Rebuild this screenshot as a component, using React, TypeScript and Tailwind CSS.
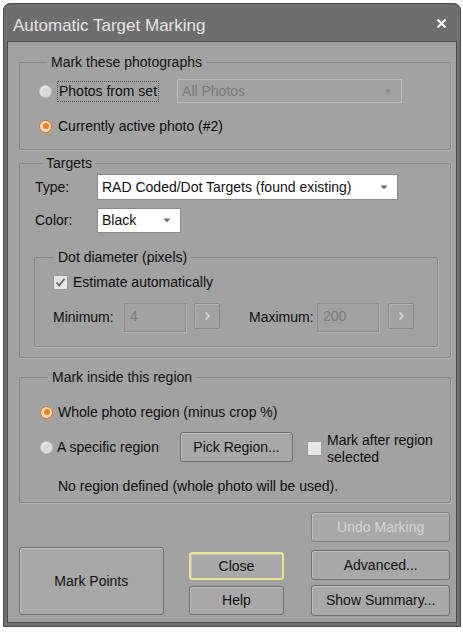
import React from "react";

const FONT = "font-['Liberation_Sans',Arial,sans-serif]";

function Radio({ checked = false }: { checked?: boolean }) {
  return checked ? (
    <span className="flex h-[13px] w-[13px] shrink-0 items-center justify-center rounded-full border border-[#c9732c] bg-[#f4d9bd] shadow-[0_0_2px_#e8a060]">
      <span className="h-[6px] w-[6px] rounded-full bg-[#e9801f]" />
    </span>
  ) : (
    <span className="h-[13px] w-[13px] shrink-0 rounded-full border border-[#c4c4c4] bg-[#dadada] shadow-[inset_1px_1px_2px_#f4f4f4]" />
  );
}

function Checkbox({ checked = false }: { checked?: boolean }) {
  return (
    <span className="flex h-[15px] w-[15px] shrink-0 items-center justify-center border border-[#9a9a9a] bg-[#e6e6e6]">
      {checked && (
        <svg width="11" height="11" viewBox="0 0 11 11">
          <path d="M1.5 5.5 L4.2 8.5 L9.5 1.8" fill="none" stroke="#6a6a6a" strokeWidth="1.8" />
        </svg>
      )}
    </span>
  );
}

function Arrow({ color = "#6c6c6c" }: { color?: string }) {
  return (
    <svg width="8" height="5" viewBox="0 0 8 5">
      <path d="M0.5 0.5 L7.5 0.5 L4 4.5 Z" fill={color} />
    </svg>
  );
}

function Btn({
  children,
  className = "",
}: {
  children: React.ReactNode;
  className?: string;
}) {
  return (
    <div
      className={
        "flex items-center justify-center rounded-[3px] border border-[#6f6f6f] bg-[#a8a8a8] text-[14px] text-[#111] shadow-[inset_1px_1px_0_#bebebe] " +
        className
      }
    >
      {children}
    </div>
  );
}

function Step() {
  return (
    <div className="flex h-[26px] w-[26px] items-center justify-center rounded-[2px] border border-[#878787] bg-[#a2a2a2] shadow-[inset_1px_1px_0_#b4b4b4]">
      <svg width="7" height="10" viewBox="0 0 7 10">
        <path d="M1.5 1.5 L5 5 L1.5 8.5" fill="none" stroke="#dcdcdc" strokeWidth="1.6" />
      </svg>
    </div>
  );
}

function Field({ value, className = "" }: { value: string; className?: string }) {
  return (
    <div
      className={
        "h-[29px] w-[62px] border border-[#8e8e8e] bg-[#a2a2a2] pl-[5px] pt-[4px] text-[14px] leading-[16px] text-[#7c7c7c] shadow-[1px_1px_0_#b2b2b2] " +
        className
      }
    >
      {value}
    </div>
  );
}

const GROUP =
  "rounded-[2px] border border-[#888888] shadow-[1px_1px_0_#b3b3b3]";
const LEGEND = "ml-[8px] px-[4px] text-[14px] leading-[16px] text-[#111]";

export default function App() {
  return (
    <div className={"h-[634px] w-[463px] bg-white pl-[3px] pt-[3px] " + FONT}>
      <div className="flex h-[624px] w-[458px] flex-col rounded-t-[7px] border border-[#4d4d4d] bg-[#6e6e6e] px-[3px] pb-[3px]">
        {/* title bar */}
        <div className="flex h-[37px] shrink-0 items-center justify-between pl-[6px] pr-[10px] pt-[7px]">
          <span className="text-[17px] text-[#e4e4e4]">Automatic Target Marking</span>
          <svg width="11" height="11" viewBox="0 0 11 11" className="-mt-[6px]">
            <path d="M1.5 1.5 L9.5 9.5 M9.5 1.5 L1.5 9.5" stroke="#f2f2f2" strokeWidth="2.4" />
          </svg>
        </div>

        {/* body */}
        <div className="flex flex-1 flex-col border border-[#4f4f4f] bg-[#a2a2a2] pl-[11px] pr-[6px] pt-[12px] pb-[6px] text-[14px] text-[#0d0d0d]">
          {/* Mark these photographs */}
          <fieldset className={"w-[432px] pb-[13px] pl-[19px] " + GROUP}>
            <legend className={LEGEND}>Mark these photographs</legend>
            <div className="mt-[9px] flex h-[24px] items-center">
              <Radio />
              <span className="ml-[5px] border border-dotted border-[#555] px-[1px] leading-[19px]">
                Photos from set
              </span>
              <div className="ml-[18px] flex h-[24px] w-[225px] items-center justify-between border border-[#bdbdbd] pl-[4px] pr-[9px] text-[#7a7a7a]">
                <span>All Photos</span>
                <Arrow color="#8c8c8c" />
              </div>
            </div>
            <div className="mt-[13px] flex h-[20px] items-center">
              <Radio checked />
              <span className="ml-[6px]">Currently active photo (#2)</span>
            </div>
          </fieldset>

          {/* Targets */}
          <fieldset className={"mt-[5px] w-[432px] pb-[10px] pl-[14px] " + GROUP}>
            <legend className={LEGEND}>Targets</legend>
            <div className="mt-[3px] flex h-[26px] items-center">
              <span className="w-[63px] pl-[1px]">Type:</span>
              <div className="flex h-[26px] w-[301px] items-center justify-between border border-[#8a8a8a] bg-white pl-[4px] pr-[9px] text-[#111]">
                <span>RAD Coded/Dot Targets (found existing)</span>
                <Arrow />
              </div>
            </div>
            <div className="mt-[8px] flex h-[25px] items-center">
              <span className="w-[63px] pl-[1px]">Color:</span>
              <div className="flex h-[25px] w-[84px] items-center justify-between border border-[#8a8a8a] bg-white pl-[4px] pr-[9px] text-[#111]">
                <span>Black</span>
                <Arrow />
              </div>
            </div>

            <fieldset className={"mt-[16px] w-[404px] pb-[14px] pl-[18px] " + GROUP}>
              <legend className="ml-[1px] px-[4px] text-[14px] leading-[16px]">
                Dot diameter (pixels)
              </legend>
              <div className="mt-[9px] flex h-[16px] items-center">
                <Checkbox checked />
                <span className="ml-[5px]">Estimate automatically</span>
              </div>
              <div className="mt-[13px] flex h-[29px] items-center">
                <span className="w-[71px]">Minimum:</span>
                <Field value="4" />
                <div className="ml-[8px] mb-[3px]">
                  <Step />
                </div>
                <span className="ml-[29px] w-[68px]">Maximum:</span>
                <Field value="200" />
                <div className="ml-[9px] mb-[3px]">
                  <Step />
                </div>
              </div>
            </fieldset>
          </fieldset>

          {/* Mark inside this region */}
          <fieldset className={"mt-[11px] w-[432px] pb-[6px] pl-[20px] " + GROUP}>
            <legend className={LEGEND}>Mark inside this region</legend>
            <div className="mt-[17px] flex h-[20px] items-center">
              <Radio checked />
              <span className="ml-[5px]">Whole photo region (minus crop %)</span>
            </div>
            <div className="mt-[10px] flex h-[30px] items-center">
              <Radio />
              <span className="ml-[4px] w-[123px]">A specific region</span>
              <Btn className="h-[30px] w-[113px]">Pick Region...</Btn>
              <div className="ml-[14px] mt-[2px]">
                <Checkbox />
              </div>
              <span className="ml-[5px] mt-[4px] leading-[17px]">
                Mark after region
                <br />
                selected
              </span>
            </div>
            <div className="mt-[14px] flex h-[20px] items-center pl-[18px]">
              No region defined (whole photo will be used).
            </div>
          </fieldset>

          {/* buttons */}
          <div className="mt-auto flex items-end">
            <Btn className="mb-[1px] h-[68px] w-[145px]">Mark Points</Btn>
            <div className="mb-[1px] ml-[25px] flex w-[96px] flex-col gap-[6px]">
              <Btn className="h-[28px] border-2 border-[#ebe394]">Close</Btn>
              <Btn className="h-[29px]">Help</Btn>
            </div>
            <div className="ml-[27px] flex w-[139px] flex-col">
              <Btn className="h-[30px] border-[#838383] bg-[#9e9e9e] text-[#d6d6d6]">Undo Marking</Btn>
              <Btn className="mt-[8px] h-[30px]">Advanced...</Btn>
              <Btn className="mt-[5px] h-[31px]">Show Summary...</Btn>
            </div>
          </div>
        </div>
      </div>
    </div>
  );
}
